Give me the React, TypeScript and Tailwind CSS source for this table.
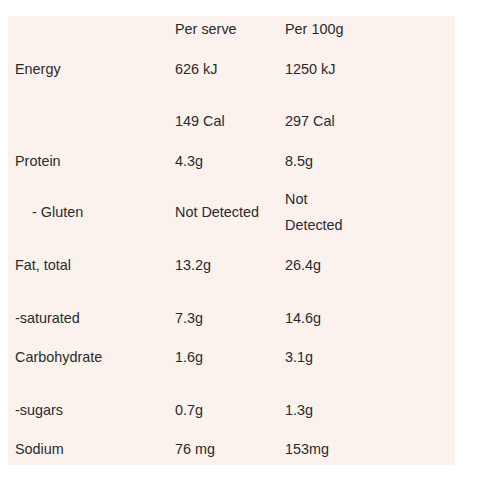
const rows = [
  { label: "", serve: "Per serve", per100: "Per 100g", gap: "mt-[3px]" },
  { label: "Energy", serve: "626 kJ", per100: "1250 kJ", gap: "mt-[14px]" },
  { label: "", serve: "149 Cal", per100: "297 Cal", gap: "mt-[26px]" },
  { label: "Protein", serve: "4.3g", per100: "8.5g", gap: "mt-[14px]" },
  { label: "- Gluten", serve: "Not Detected", per100: "Not Detected", gap: "mt-[12px]", indent: true },
  { label: "Fat, total", serve: "13.2g", per100: "26.4g", gap: "mt-[14px]" },
  { label: "-saturated", serve: "7.3g", per100: "14.6g", gap: "mt-[27px]" },
  { label: "Carbohydrate", serve: "1.6g", per100: "3.1g", gap: "mt-[13px]" },
  { label: "-sugars", serve: "0.7g", per100: "1.3g", gap: "mt-[27px]" },
  { label: "Sodium", serve: "76 mg", per100: "153mg", gap: "mt-[13px]" },
];

const App = () => {
  return (
    <div className="min-h-[480px] bg-white pt-[13px] pl-2">
      <div
        className="w-[447px] bg-[#fbf2ee] px-[7px] pb-[3px] text-[14.4px] leading-[26px] text-[#2a2a2a]"
        style={{ fontFamily: '"Liberation Sans", Arial, sans-serif' }}
      >
        {rows.map((row, i) => (
          <div key={i} className={`grid grid-cols-[160px_110px_80px] items-center ${row.gap}`}>
            <div className={row.indent ? "pl-[17px]" : ""}>{row.label}</div>
            <div>{row.serve}</div>
            <div>{row.per100}</div>
          </div>
        ))}
      </div>
    </div>
  );
};

export default App;
